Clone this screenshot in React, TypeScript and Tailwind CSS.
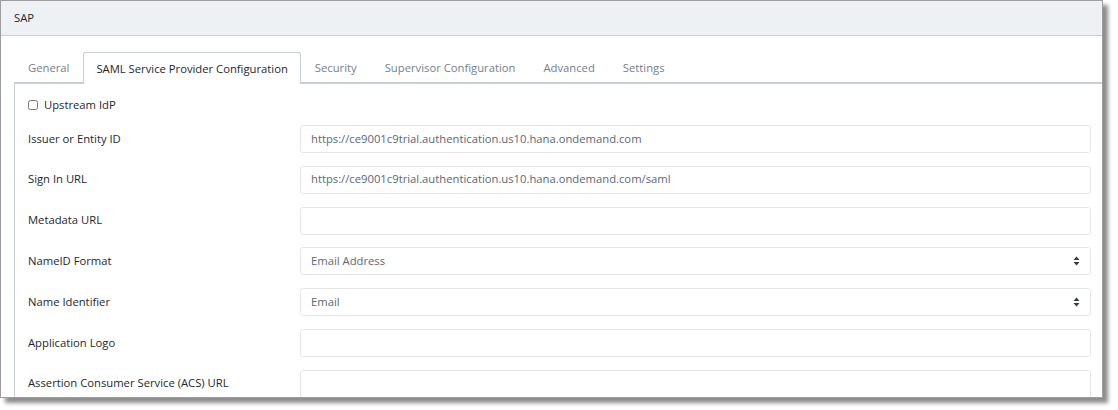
import { useState } from "react";

const tabs = [
  "General",
  "SAML Service Provider Configuration",
  "Security",
  "Supervisor Configuration",
  "Advanced",
  "Settings",
];

const fields = [
  { label: "Issuer or Entity ID", value: "https://ce9001c9trial.authentication.us10.hana.ondemand.com" },
  { label: "Sign In URL", value: "https://ce9001c9trial.authentication.us10.hana.ondemand.com/saml" },
  { label: "Metadata URL", value: "" },
  { label: "NameID Format", value: "Email Address", select: true },
  { label: "Name Identifier", value: "Email", select: true },
  { label: "Application Logo", value: "" },
  { label: "Assertion Consumer Service (ACS) URL", value: "" },
];

function SortArrows() {
  return (
    <svg width="7" height="10" viewBox="0 0 7 10" className="text-[#343a40]">
      <path d="M3.5 0.5 L6.5 4 L0.5 4 Z" fill="currentColor" />
      <path d="M3.5 9.5 L6.5 6 L0.5 6 Z" fill="currentColor" />
    </svg>
  );
}

export default function App() {
  const [active, setActive] = useState(1);
  const [upstream, setUpstream] = useState(false);

  return (
    <div className="w-[1118px] h-[410px] bg-white" style={{ fontFamily: '"Open Sans", sans-serif' }}>
      <div className="w-[1103px] h-[398px] border border-[#9e9e9e] overflow-hidden bg-white shadow-[5px_5px_4px_rgba(0,0,0,0.45)] text-[11.25px]">
        {/* header */}
        <div className="h-[35px] bg-[#eef1f4] border-b border-[#c8ced3] flex items-center px-[13px] text-[#23282c]">
          SAP
        </div>

        <div className="pl-[13px] pt-[16px]">
          {/* tabs */}
          <div className="flex border-b-2 border-[#c8ced3] h-[32px]">
            {tabs.map((t, i) => (
              <button
                key={t}
                onClick={() => setActive(i)}
                className={
                  i === active
                    ? "px-[12px] pt-[2px] h-[32px] -mb-[2px] bg-white border border-b-0 border-[#c8ced3] rounded-t-[3px] text-[#23282c]"
                    : "px-[14px] pt-[2px] h-[30px] text-[#73818f]"
                }
              >
                {t}
              </button>
            ))}
          </div>

          {/* panel */}
          <div className="border-l border-[#c8ced3] pl-[13px] pr-[11px] pt-[15px]">
            <label className="flex items-center gap-[6px] h-[12px] text-[#23282c]">
              <input
                type="checkbox"
                checked={upstream}
                onChange={(e) => setUpstream(e.target.checked)}
                className="w-[10px] h-[10px] m-0"
              />
              Upstream IdP
            </label>

            <div className="mt-[14px] flex flex-col gap-[12.8px]">
              {fields.map((f) => (
                <div key={f.label} className="flex items-center h-[28px]">
                  <div className="w-[272px] text-[#23282c]">{f.label}</div>
                  <div className="flex-1 h-[28px] border border-[#e4e7ea] rounded-[3px] flex items-center justify-between px-[10px] text-[#5c6873]">
                    <span>{f.value}</span>
                    {f.select && <SortArrows />}
                  </div>
                </div>
              ))}
            </div>
          </div>
        </div>
      </div>
    </div>
  );
}
